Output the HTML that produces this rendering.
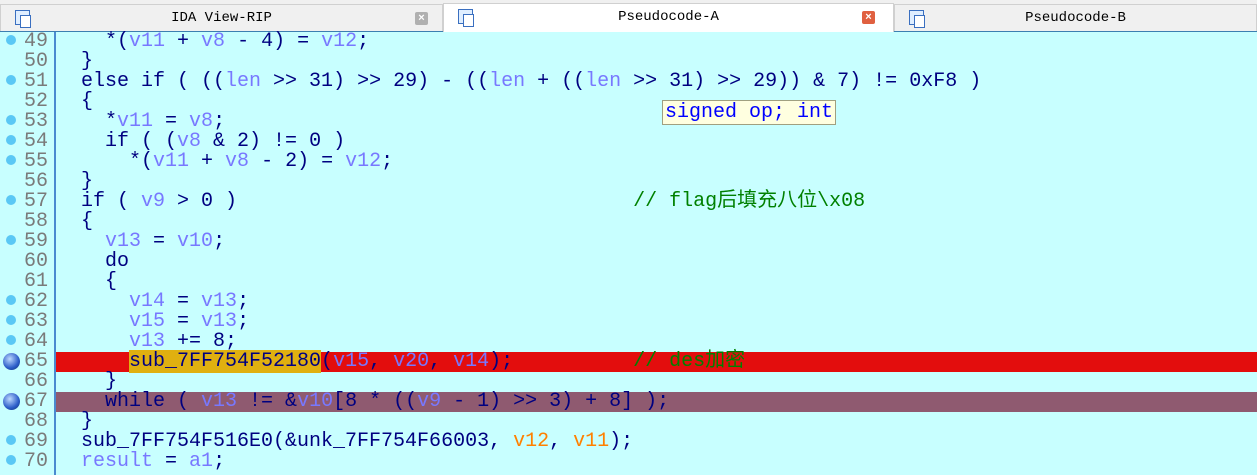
<!DOCTYPE html>
<html><head><meta charset="utf-8"><style>
body{margin:0;width:1257px;height:475px;overflow:hidden;background:#c8ffff;font-family:"Liberation Mono","Noto Sans CJK SC",monospace;}
.tabs{position:absolute;left:0;top:0;width:1257px;height:31px;background:#f0f0f0;border-bottom:1px solid #3c7fb1;}
.tab{position:absolute;top:4px;height:27px;font-size:14px;line-height:27px;text-align:center;color:#000;background:#f0f0f0;border:1px solid #d0d0d0;border-bottom:none;box-sizing:border-box}
.tab.act{background:#fff;top:3px;height:29px}
.ic{position:absolute;left:14px;top:5px;width:13px;height:13px;border:1px solid #3a6fc0;background:#dfeeff}
.ic:after{content:"";position:absolute;left:4px;top:4px;width:9px;height:11px;background:#fff;border:1px solid #3a6fc0}
.x{position:absolute;top:7px;width:13px;height:13px;border-radius:2px;color:#fff;font-size:11px;line-height:13px;text-align:center;font-family:"Liberation Sans",sans-serif;font-weight:bold}
.gut{position:absolute;left:54px;top:32px;width:2px;height:443px;background:#4a8ad0}
.row{position:absolute;left:0;width:1257px;height:20px;font-size:20px;line-height:24px;white-space:pre;color:#000080}
.n{position:absolute;left:0;width:48px;text-align:right;color:#7a7a7a}
.c{position:absolute;left:57px}
.d{position:absolute;left:6px;top:5px;width:10px;height:10px;border-radius:50%;background:#5ac8f5}
.b{position:absolute;left:3px;top:1px;width:17px;height:17px;border-radius:50%;background:radial-gradient(circle at 40% 35%,#bcd8ff,#2a5cc8 60%,#10306a)}
.v{color:#7878ff}.o{color:#ff8000}.g{color:#008000}
</style></head><body>
<div class="tabs">
<div class="tab" style="left:0;width:443px"><div class="ic"></div>IDA View-RIP<div class="x" style="left:414px;background:#b0b0b0">×</div></div>
<div class="tab act" style="left:443px;width:451px"><div class="ic"></div>Pseudocode-A<div class="x" style="left:418px;background:#e06040">×</div></div>
<div class="tab" style="left:894px;width:363px"><div class="ic"></div>Pseudocode-B</div>
</div>
<div class="gut"></div>

<div class="row" style="top:30px"><span class="d"></span><span class="n">49</span><span class="c">    *(<span class="v">v11</span> + <span class="v">v8</span> - 4) = <span class="v">v12</span>;</span></div>
<div class="row" style="top:50px"><span class="n">50</span><span class="c">  }</span></div>
<div class="row" style="top:70px"><span class="d"></span><span class="n">51</span><span class="c">  else if ( ((<span class="v">len</span> &gt;&gt; 31) &gt;&gt; 29) - ((<span class="v">len</span> + ((<span class="v">len</span> &gt;&gt; 31) &gt;&gt; 29)) &amp; 7) != 0xF8 )</span></div>
<div class="row" style="top:90px"><span class="n">52</span><span class="c">  {</span></div>
<div class="row" style="top:110px"><span class="d"></span><span class="n">53</span><span class="c">    *<span class="v">v11</span> = <span class="v">v8</span>;</span></div>
<div class="row" style="top:130px"><span class="d"></span><span class="n">54</span><span class="c">    if ( (<span class="v">v8</span> &amp; 2) != 0 )</span></div>
<div class="row" style="top:150px"><span class="d"></span><span class="n">55</span><span class="c">      *(<span class="v">v11</span> + <span class="v">v8</span> - 2) = <span class="v">v12</span>;</span></div>
<div class="row" style="top:170px"><span class="n">56</span><span class="c">  }</span></div>
<div class="row" style="top:190px"><span class="d"></span><span class="n">57</span><span class="c">  if ( <span class="v">v9</span> &gt; 0 )                                 <span class="g">// flag后填充八位\x08</span></span></div>
<div class="row" style="top:210px"><span class="n">58</span><span class="c">  {</span></div>
<div class="row" style="top:230px"><span class="d"></span><span class="n">59</span><span class="c">    <span class="v">v13</span> = <span class="v">v10</span>;</span></div>
<div class="row" style="top:250px"><span class="n">60</span><span class="c">    do</span></div>
<div class="row" style="top:270px"><span class="n">61</span><span class="c">    {</span></div>
<div class="row" style="top:290px"><span class="d"></span><span class="n">62</span><span class="c">      <span class="v">v14</span> = <span class="v">v13</span>;</span></div>
<div class="row" style="top:310px"><span class="d"></span><span class="n">63</span><span class="c">      <span class="v">v15</span> = <span class="v">v13</span>;</span></div>
<div class="row" style="top:330px"><span class="d"></span><span class="n">64</span><span class="c">      <span class="v">v13</span> += 8;</span></div>
<div class="row" style="top:350px"><div style="position:absolute;left:56px;top:2px;width:1201px;height:20px;background:#e30d0d"></div><span class="b" style="top:3px"></span><span class="n">65</span><span class="c">      <span style="background:#e0b010">sub_7FF754F52180</span>(<span class="v">v15</span>, <span class="v">v20</span>, <span class="v">v14</span>);          <span class="g">// des加密</span></span></div>
<div class="row" style="top:370px"><span class="n">66</span><span class="c">    }</span></div>
<div class="row" style="top:390px"><div style="position:absolute;left:56px;top:2px;width:1201px;height:20px;background:#8f5a70"></div><span class="b" style="top:3px"></span><span class="n">67</span><span class="c">    while ( <span class="v">v13</span> != &amp;<span class="v">v10</span>[8 * ((<span class="v">v9</span> - 1) &gt;&gt; 3) + 8] );</span></div>
<div class="row" style="top:410px"><span class="n">68</span><span class="c">  }</span></div>
<div class="row" style="top:430px"><span class="d"></span><span class="n">69</span><span class="c">  sub_7FF754F516E0(&amp;unk_7FF754F66003, <span class="o">v12</span>, <span class="o">v11</span>);</span></div>
<div class="row" style="top:450px"><span class="d"></span><span class="n">70</span><span class="c">  <span class="v">result</span> = <span class="v">a1</span>;</span></div>

<div style="position:absolute;left:662px;top:100px;height:23px;padding:0 2px;background:#ffffe0;border:1px solid #a0a080;font-size:20px;line-height:24px;color:#0000ff;white-space:pre">signed op; int</div>
</body></html>
